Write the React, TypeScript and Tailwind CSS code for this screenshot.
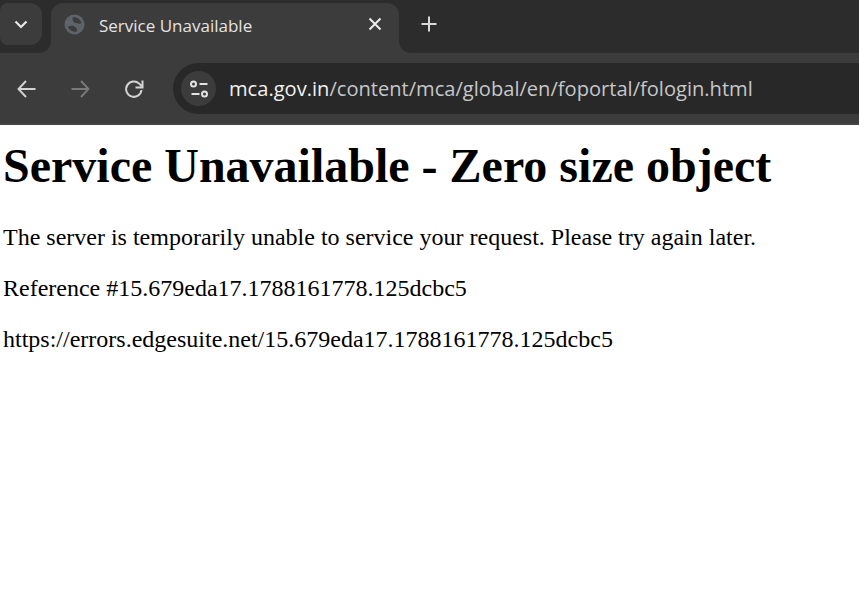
import React from 'react';

const uiFont = "font-['Open_Sans',sans-serif]";

const TabStrip = () => {
  return (
    <div className="flex h-[53px] bg-[#2c2c2c]">
      <div className="w-[51px] pt-[3px] shrink-0">
        <button className="flex h-[42px] w-[42px] items-center justify-center rounded-r-[12px] rounded-l-[8px] bg-[#3c3c3c]">
          <svg width="16" height="16" viewBox="0 0 16 16" fill="none">
            <path d="M2.5 5.500 8 11l5.500-5.500" stroke="#e8e8e8" strokeWidth="2.2" />
          </svg>
        </button>
      </div>
      <div className="relative mt-[3px] flex h-[50px] w-[348px] items-start rounded-t-[12px] bg-[#3c3c3c]">
        <span className="absolute bottom-0 left-[-12px] h-[12px] w-[12px] bg-[radial-gradient(circle_at_0_0,#2c2c2c_11.5px,#3c3c3c_12.5px)]" />
        <span className="absolute bottom-0 right-[-12px] h-[12px] w-[12px] bg-[radial-gradient(circle_at_100%_0,#2c2c2c_11.5px,#3c3c3c_12.5px)]" />
        <svg className="ml-[13px] mt-[11px] shrink-0" width="21" height="21" viewBox="0 0 22 22">
          <circle cx="11" cy="11" r="10.500" fill="#5d6368" />
          <path d="M9 3.500C13 2.500 17 5 18.500 9.500 16 11 13.500 9.500 11.500 9.500 10 9 8.500 6.500 9 3.500Z" fill="#3c3c3c" />
          <path d="M4 13.500C7 11.500 10 12.500 11.500 13.500 13.500 14 14 16.500 13.500 18.500 9.500 19 5.500 17 4 13.500Z" fill="#3c3c3c" />
        </svg>
        <span className={`${uiFont} ml-[14px] mt-[11px] text-[17px] leading-[24px] text-[#e3e3e3]`}>Service Unavailable</span>
        <svg className="absolute left-[317px] top-[14px]" width="14" height="14" viewBox="0 0 14 14" fill="none">
          <path d="M1.500 1.500 12.500 12.500M12.500 1.500 1.500 12.500" stroke="#ececec" strokeWidth="2" />
        </svg>
      </div>
      <svg className="ml-[21px] mt-[15px]" width="18" height="18" viewBox="0 0 18 18" fill="none">
        <path d="M9 1.500v15M1.500 9h15" stroke="#d8d8d8" strokeWidth="2" />
      </svg>
    </div>
  );
};

const Toolbar = () => {
  return (
    <div className="flex h-[72px] items-start border-b-2 border-[#444444] bg-[#3c3c3c] pt-[10px]">
      <div className="flex h-[51px] w-[173px] shrink-0 items-center">
        <svg className="ml-[16px]" width="21" height="20" viewBox="0 0 21 20" fill="none">
          <path d="M19.500 10H2.500M10 2 2.500 10l7.500 8" stroke="#d3d3d3" strokeWidth="1.900" />
        </svg>
        <svg className="ml-[33px]" width="21" height="20" viewBox="0 0 21 20" fill="none">
          <path d="M1.500 10h17M11 2l7.500 8-7.500 8" stroke="#77797a" strokeWidth="1.900" />
        </svg>
        <svg className="ml-[33px]" width="20" height="20" viewBox="0 0 20 20" fill="none">
          <path d="M17.500 11a7.700 7.700 0 1 1-2.300-6.400L18 7.500" stroke="#d3d3d3" strokeWidth="2" />
          <path d="M18.500 1.500v7h-7" stroke="#d3d3d3" strokeWidth="2" />
        </svg>
      </div>
      <div className="flex h-[51px] flex-1 items-center rounded-l-full bg-[#282828]">
        <div className="ml-[8px] flex h-[35px] w-[35px] shrink-0 items-center justify-center rounded-full bg-[#3c3c3c]">
          <svg width="20" height="20" viewBox="0 0 20 20" fill="none" stroke="#e3e3e3" strokeWidth="2">
            <circle cx="4.500" cy="5" r="2.500" />
            <path d="M10.500 5h8M2.500 15h8" />
            <circle cx="15.500" cy="15" r="2.500" />
          </svg>
        </div>
        <div className={`${uiFont} ml-[13px] whitespace-nowrap text-[20.100px] leading-[28px] text-[#c5c7c9]`}>
          <span className="text-[#f1f1f1]">mca.gov.in</span>/content/mca/global/en/foportal/fologin.html
        </div>
      </div>
    </div>
  );
};

export default function App() {
  return (
    <div className="h-[593px] w-[859px] overflow-hidden bg-white">
      <TabStrip />
      <Toolbar />
      <div className="pl-[3px] font-['Liberation_Serif',serif] text-[24px] leading-[28px] text-black">
        <h1 className="mt-[13px] text-[48px] font-bold leading-[55px]">Service Unavailable - Zero size object</h1>
        <p className="mt-[30px]">The server is temporarily unable to service your request. Please try again later.</p>
        <p className="mt-[23px]">Reference #15.679eda17.1788161778.125dcbc5</p>
        <p className="mt-[23px]">https://errors.edgesuite.net/15.679eda17.1788161778.125dcbc5</p>
      </div>
    </div>
  );
}
